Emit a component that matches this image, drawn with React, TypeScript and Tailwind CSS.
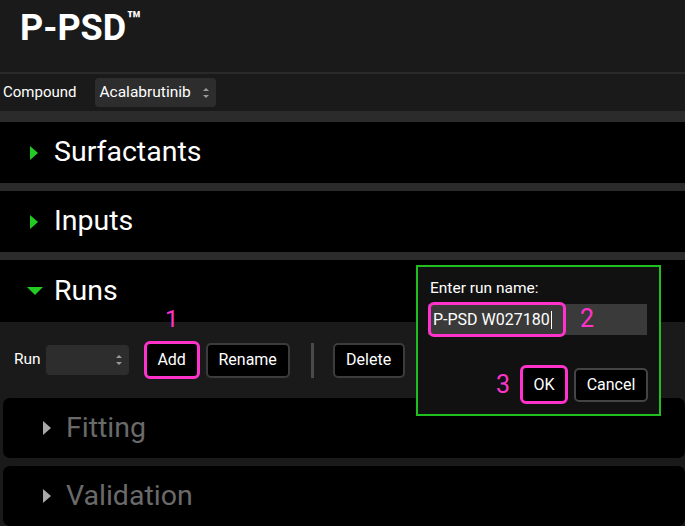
import React from "react";

const RightTriangle = ({ color }: { color: string }) => (
  <svg width="8" height="14" viewBox="0 0 8 14" className="shrink-0">
    <polygon points="0,0 8,7 0,14" fill={color} />
  </svg>
);

const DownTriangle = ({ color }: { color: string }) => (
  <svg width="16" height="8" viewBox="0 0 16 8" className="shrink-0">
    <polygon points="0,0 16,0 8,8" fill={color} />
  </svg>
);

const Spinner = () => (
  <svg width="8" height="14" viewBox="0 0 8 14" className="shrink-0">
    <polygon points="1,5 4,2 7,5" fill="#9a9a9a" />
    <polygon points="1,9 4,12 7,9" fill="#9a9a9a" />
  </svg>
);

const Section = ({ label }: { label: string }) => (
  <div className="flex h-[61px] items-center bg-black pl-[30px]">
    <RightTriangle color="#22cc22" />
    <span className="ml-[16px] text-[28.5px] text-white">{label}</span>
  </div>
);

const Band = ({ h }: { h: string }) => <div className={`${h} bg-[#2b2b2b]`} />;

const SubPanel = ({ label }: { label: string }) => (
  <div className="ml-[3px] flex h-[60px] items-center rounded-[7px] bg-black pl-[40px]">
    <RightTriangle color="#a8a8a8" />
    <span className="ml-[15px] text-[28.5px] text-[#6a6a6a]">{label}</span>
  </div>
);

export default function App() {
  return (
    <div className="relative h-[526px] w-[685px] overflow-hidden bg-[#1a1a1a] font-['Roboto',sans-serif]">
      {/* Header */}
      <div className="flex h-[72px] items-start bg-[#1a1a1a] pl-[20px] pt-[6px]">
        <span className="text-[36px] font-bold leading-[44px] text-white">
          P-PSD<span className="relative top-[-12px] text-[24px]">™</span>
        </span>
      </div>
      <div className="h-[2px] bg-[#2a2a2a]" />
      <div className="flex h-[37px] items-center pl-[3px]">
        <span className="text-[15px] text-white">Compound</span>
        <div className="ml-[19px] flex h-[29px] w-[121px] items-center justify-between rounded-[4px] bg-[#2d2d2d] pl-[4px] pr-[6px]">
          <span className="text-[15.5px] text-white">Acalabrutinib</span>
          <Spinner />
        </div>
      </div>

      <Band h="h-[11px]" />
      <Section label="Surfactants" />
      <Band h="h-[8px]" />
      <Section label="Inputs" />
      <Band h="h-[8px]" />

      {/* Runs */}
      <div className="flex h-[62px] items-center bg-black pl-[27px]">
        <DownTriangle color="#22cc22" />
        <span className="ml-[11px] text-[28.5px] text-white">Runs</span>
      </div>
      <div className="bg-[#1a1a1a]">
        <div className="flex h-[76px] items-center pl-[14px]">
          <span className="text-[15.5px] text-white">Run</span>
          <div className="ml-[5px] flex h-[30px] w-[83px] items-center justify-end rounded-[4px] bg-[#2d2d2d] pr-[6px]">
            <Spinner />
          </div>
          <button className="ml-[15px] flex h-[38px] w-[56px] items-center justify-center rounded-[6px] border-[3px] border-[#ff33cc] bg-black text-[16px] text-white">
            Add
          </button>
          <button className="ml-[6px] flex h-[35px] w-[84px] items-center justify-center rounded-[5px] border-2 border-[#3c3c3c] bg-black text-[16px] text-white">
            Rename
          </button>
          <div className="ml-[21px] h-[35px] w-[3px] bg-[#4a4a4a]" />
          <button className="ml-[19px] flex h-[35px] w-[72px] items-center justify-center rounded-[5px] border-2 border-[#3c3c3c] bg-black text-[16px] text-white">
            Delete
          </button>
        </div>
        <SubPanel label="Fitting" />
        <div className="h-[8px]" />
        <SubPanel label="Validation" />
      </div>

      {/* annotation 1 */}
      <span className="absolute left-[165px] top-[304px] text-[24px] leading-[30px] text-[#ff33cc]">1</span>

      {/* Dialog */}
      <div className="absolute left-[416px] top-[265px] h-[151px] w-[245px] border-2 border-[#1fbf1f] bg-[#111111]">
        <div className="pl-[12px] pt-[12px] text-[15.5px] leading-[19px] text-white">Enter run name:</div>
        <div className="relative ml-[10px] mt-[6px] flex h-[31px] w-[219px] items-center bg-[#3a3a3a]">
          <div className="absolute left-0 top-[-2px] h-[35px] w-[138px] rounded-[6px] border-[3px] border-[#ff33cc]" />
          <span className="pl-[5px] text-[16px] text-white">P-PSD W027180</span>
          <span className="ml-[1px] h-[18px] w-[1px] bg-white" />
          <span className="absolute left-[152px] top-[-2px] text-[25px] leading-[34px] text-[#ff33cc]">2</span>
        </div>
        <div className="mt-[30px] flex items-center justify-end pr-[11px]">
          <span className="mr-[10px] text-[25px] leading-[30px] text-[#ff33cc]">3</span>
          <button className="flex h-[39px] w-[48px] items-center justify-center rounded-[6px] border-[3px] border-[#ff33cc] bg-black text-[16px] text-white">
            OK
          </button>
          <button className="ml-[6px] flex h-[34px] w-[74px] items-center justify-center rounded-[5px] border-2 border-[#444] bg-black text-[16px] text-white">
            Cancel
          </button>
        </div>
      </div>
    </div>
  );
}
